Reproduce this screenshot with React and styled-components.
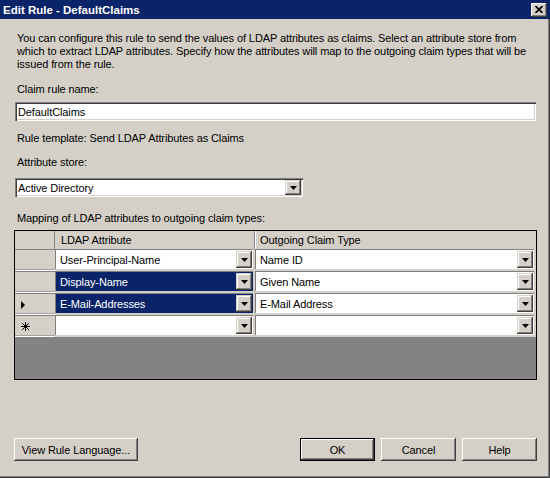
import React from "react";
import styled, { createGlobalStyle } from "styled-components";

const GlobalStyle = createGlobalStyle`
  html, body {
    margin: 0;
    padding: 0;
    background: #d4d0c8;
  }
  body {
    font-family: "Liberation Sans", Arial, sans-serif;
    font-size: 11px;
    letter-spacing: -0.1px;
    color: #000;
  }
  * {
    box-sizing: border-box;
  }
`;

const raised = `
  box-shadow: inset -1px -1px #404040, inset 1px 1px #ffffff,
    inset -2px -2px #808080, inset 2px 2px #d4d0c8;
`;

const comboRaised = `
  box-shadow: inset -1px -1px #404040, inset 1px 1px #d4d0c8,
    inset -2px -2px #808080, inset 2px 2px #ffffff;
`;

const sunken = `
  box-shadow: inset 1px 1px #808080, inset 2px 2px #404040,
    inset -1px -1px #ffffff, inset -2px -2px #d4d0c8;
`;

const rows = [
  { attr: "User-Principal-Name", claim: "Name ID", selected: false, marker: null },
  { attr: "Display-Name", claim: "Given Name", selected: true, marker: null },
  { attr: "E-Mail-Addresses", claim: "E-Mail Address", selected: true, marker: "current" },
  { attr: "", claim: "", selected: false, marker: "new" },
];

function App() {
  return (
    <>
      <GlobalStyle />
      <Window>
        <TitleBar>
          <span>Edit Rule - DefaultClaims</span>
          <CloseButton>
            <svg width="8" height="7" viewBox="0 0 8 7">
              <path d="M0.5 0 L7.5 7 M7.5 0 L0.5 7" stroke="#000" strokeWidth="1.7" />
            </svg>
          </CloseButton>
        </TitleBar>

        <Body>
          <Description>
            You can configure this rule to send the values of LDAP attributes as claims. Select an attribute store from
            <br />
            which to extract LDAP attributes. Specify how the attributes will map to the outgoing claim types that will be
            <br />
            issued from the rule.
          </Description>

          <Label $top={12}>Claim rule name:</Label>
          <TextBox>DefaultClaims</TextBox>

          <Label $top={11}>Rule template: Send LDAP Attributes as Claims</Label>

          <Label $top={11}>Attribute store:</Label>
          <Select>
            <SelectText>Active Directory</SelectText>
            <DropButton>
              <Arrow />
            </DropButton>
          </Select>

          <Label $top={15}>Mapping of LDAP attributes to outgoing claim types:</Label>

          <Grid>
            <HeaderCorner />
            <HeaderCell $first>LDAP Attribute</HeaderCell>
            <HeaderCell>Outgoing Claim Type</HeaderCell>

            {rows.map((row, i) => (
              <React.Fragment key={i}>
                <RowHeader>
                  {row.marker === "current" && (
                    <svg width="4" height="8" viewBox="0 0 4 8">
                      <path d="M0 0 L4 4 L0 8 Z" fill="#000" />
                    </svg>
                  )}
                  {row.marker === "new" && (
                    <svg width="9" height="9" viewBox="0 0 9 9">
                      <path
                        d="M4.5 0 V9 M0 4.5 H9 M1.2 1.2 L7.8 7.8 M7.8 1.2 L1.2 7.8"
                        stroke="#000"
                        strokeWidth="1"
                      />
                    </svg>
                  )}
                </RowHeader>
                <Cell $selected={row.selected}>
                  <CellText>{row.attr}</CellText>
                  <CellButton>
                    <Arrow />
                  </CellButton>
                </Cell>
                <Cell>
                  <CellText>{row.claim}</CellText>
                  <CellButton>
                    <Arrow />
                  </CellButton>
                </Cell>
              </React.Fragment>
            ))}
          </Grid>

          <ButtonBar>
            <Button $width={124}>View Rule Language...</Button>
            <Spacer />
            <Button $default>OK</Button>
            <Button>Cancel</Button>
            <Button>Help</Button>
          </ButtonBar>
        </Body>
      </Window>
    </>
  );
}

function Arrow() {
  return (
    <svg width="7" height="4" viewBox="0 0 7 4">
      <path d="M0 0 H7 L3.5 4 Z" fill="#000" />
    </svg>
  );
}

const Window = styled.div`
  width: 550px;
  height: 478px;
  display: flex;
  flex-direction: column;
  background: #d4d0c8;
  overflow: hidden;
`;

const TitleBar = styled.div`
  flex: none;
  height: 19px;
  padding: 0 3px;
  display: flex;
  align-items: center;
  justify-content: space-between;
  background: #0a246a;
  color: #fff;
  font-weight: bold;
  font-size: 11.5px;
  letter-spacing: 0;
`;

const CloseButton = styled.div`
  width: 16px;
  height: 14px;
  display: flex;
  align-items: center;
  justify-content: center;
  background: #d4d0c8;
  ${raised}
`;

const Body = styled.div`
  flex: 1;
  display: flex;
  flex-direction: column;
  padding: 13px 13px 17px 14px;
  box-shadow: inset -1px -1px #404040, inset -2px -2px #808080;
`;

const Description = styled.div`
  padding-left: 3px;
  line-height: 13px;
  white-space: nowrap;
`;

const Label = styled.div`
  margin-top: ${(p) => p.$top}px;
  padding-left: 3px;
  line-height: 13px;
`;

const TextBox = styled.div`
  margin: 6px 1px 0 1px;
  height: 19px;
  padding-left: 3px;
  display: flex;
  align-items: center;
  background: #fff;
  ${sunken}
`;

const Select = styled.div`
  margin: 9px 0 0 1px;
  width: 288px;
  height: 19px;
  padding: 2px;
  display: flex;
  align-items: stretch;
  background: #fff;
  ${sunken}
`;

const SelectText = styled.div`
  flex: 1;
  padding-left: 1px;
  display: flex;
  align-items: center;
`;

const DropButton = styled.div`
  width: 16px;
  display: flex;
  align-items: center;
  justify-content: center;
  background: #d4d0c8;
  ${comboRaised}
`;

const Grid = styled.div`
  margin-top: 5px;
  height: 150px;
  border: 1px solid #000;
  background: #848284;
  display: grid;
  grid-template-columns: 40px 200px 281px;
  grid-template-rows: 18px repeat(4, 22px);
  align-content: start;
`;

const HeaderCorner = styled.div`
  background: #d4d0c8;
  box-shadow: inset -1px 0 #808080;
`;

const HeaderCell = styled.div`
  padding-left: ${(p) => (p.$first ? 6 : 5)}px;
  display: flex;
  align-items: center;
  background: #d4d0c8;
  box-shadow: ${(p) => (p.$first ? "inset -1px 0 #808080" : "inset 1px 0 #ffffff")};
`;

const RowHeader = styled.div`
  padding-left: 6px;
  display: flex;
  align-items: center;
  background: #d4d0c8;
  border-top: 1px solid #808080;
  box-shadow: inset 0 -1px #ffffff, inset 0 -2px #a0a0a0;
`;

const Cell = styled.div`
  display: flex;
  align-items: stretch;
  margin: 0 2px 2px 0;
  border-top: 1px solid #808080;
  border-left: 1px solid #808080;
  background: ${(p) => (p.$selected ? "#0a246a" : "#ffffff")};
  color: ${(p) => (p.$selected ? "#ffffff" : "#000000")};
  box-shadow: 0 2px 0 #d4d0c8, 2px 0 0 #d4d0c8, 2px 2px 0 #d4d0c8;
`;

const CellText = styled.div`
  flex: 1;
  padding-left: 4px;
  display: flex;
  align-items: center;
  white-space: nowrap;
  overflow: hidden;
`;

const CellButton = styled.div`
  width: 16px;
  margin: 1px 1px 1px 0;
  display: flex;
  align-items: center;
  justify-content: center;
  background: #d4d0c8;
  ${comboRaised}
`;

const ButtonBar = styled.div`
  margin-top: auto;
  display: flex;
  gap: 6px;
`;

const Spacer = styled.div`
  flex: 1;
`;

const Button = styled.div`
  width: ${(p) => p.$width || 75}px;
  height: 23px;
  display: flex;
  align-items: center;
  justify-content: center;
  background: #d4d0c8;
  ${(p) =>
    p.$default
      ? `border: 1px solid #000;
         box-shadow: inset -1px -1px #404040, inset 1px 1px #ffffff,
           inset -2px -2px #808080, inset 2px 2px #d4d0c8;`
      : raised}
`;

export default App;
